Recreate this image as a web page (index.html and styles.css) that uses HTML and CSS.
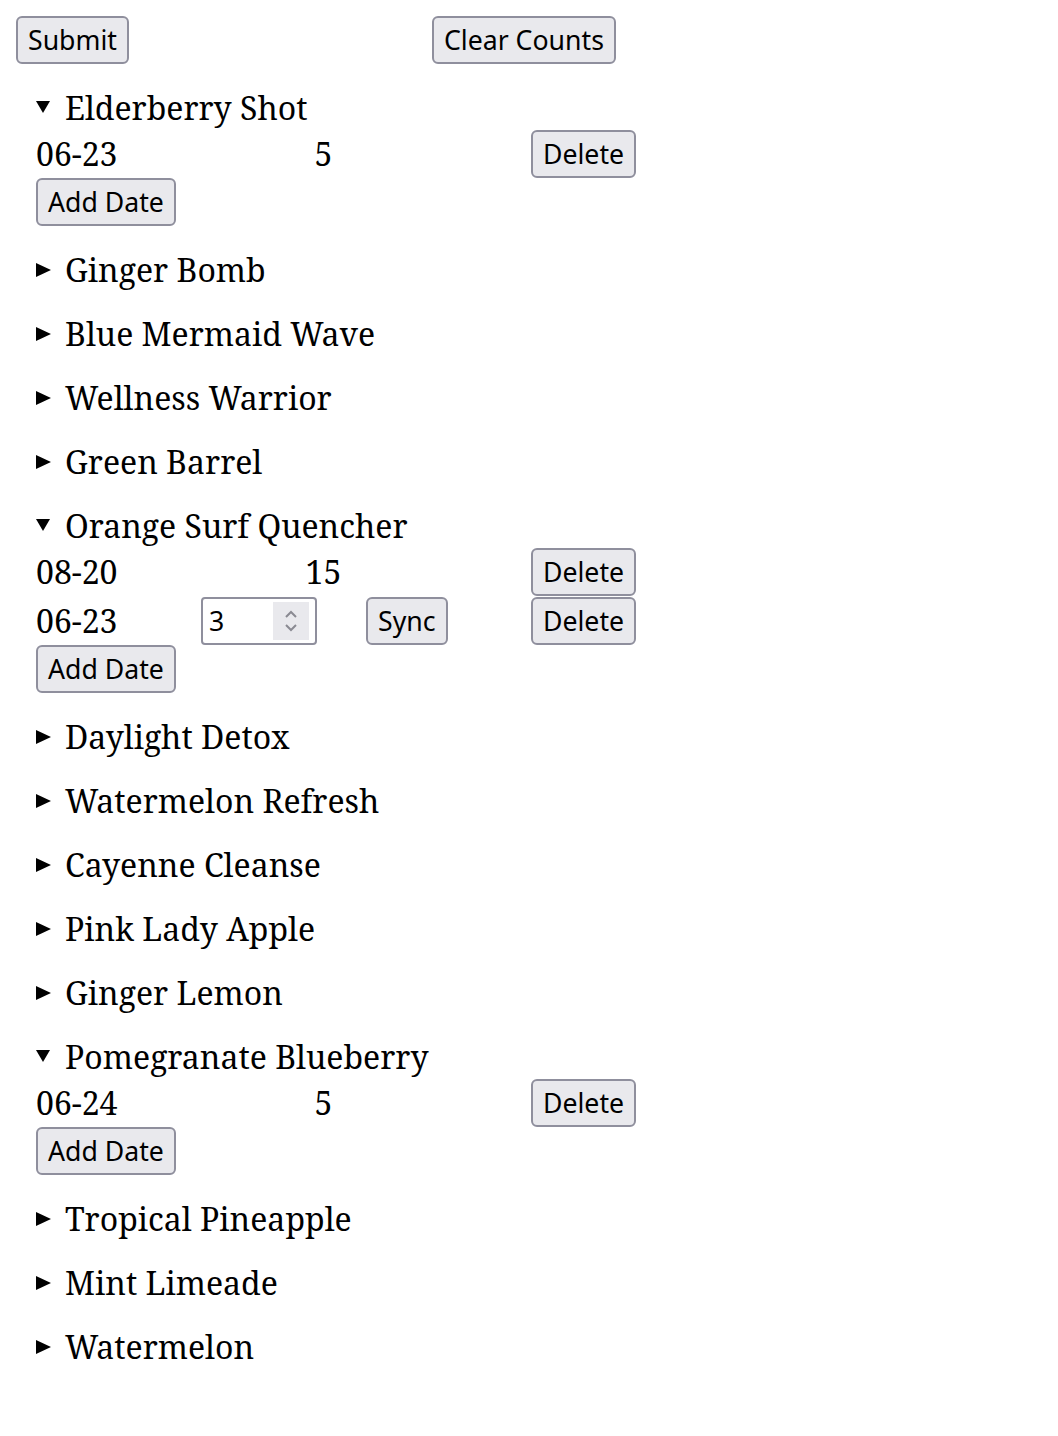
FILE: index.html
```html
<!DOCTYPE html>
<html>
<head>
<meta charset="utf-8">
<link rel="stylesheet" href="styles.css">
</head>
<body>
<div class="toolbar">
  <button class="btn">Submit</button>
  <button class="btn clear">Clear Counts</button>
</div>

<details open class="item">
  <summary>Elderberry Shot</summary>
  <div class="row">
    <span class="date">06-23</span>
    <span class="count">5</span>
    <button class="btn delete">Delete</button>
  </div>
  <div class="add"><button class="btn">Add Date</button></div>
</details>
<details class="item"><summary>Ginger Bomb</summary></details>
<details class="item"><summary>Blue Mermaid Wave</summary></details>
<details class="item"><summary>Wellness Warrior</summary></details>
<details class="item"><summary>Green Barrel</summary></details>
<details open class="item">
  <summary>Orange Surf Quencher</summary>
  <div class="row">
    <span class="date">08-20</span>
    <span class="count">15</span>
    <button class="btn delete">Delete</button>
  </div>
  <div class="row">
    <span class="date">06-23</span>
    <span class="num">
      <input class="num-input" type="text" value="3">
      <span class="spin"><svg width="16" height="26" viewBox="0 0 16 26"><path d="M3 9 L8 4 L13 9" fill="none" stroke="#8a8a92" stroke-width="2"/><path d="M3 17 L8 22 L13 17" fill="none" stroke="#8a8a92" stroke-width="2"/></svg></span>
    </span>
    <button class="btn sync">Sync</button>
    <button class="btn delete">Delete</button>
  </div>
  <div class="add"><button class="btn">Add Date</button></div>
</details>
<details class="item"><summary>Daylight Detox</summary></details>
<details class="item"><summary>Watermelon Refresh</summary></details>
<details class="item"><summary>Cayenne Cleanse</summary></details>
<details class="item"><summary>Pink Lady Apple</summary></details>
<details class="item"><summary>Ginger Lemon</summary></details>
<details open class="item">
  <summary>Pomegranate Blueberry</summary>
  <div class="row">
    <span class="date">06-24</span>
    <span class="count">5</span>
    <button class="btn delete">Delete</button>
  </div>
  <div class="add"><button class="btn">Add Date</button></div>
</details>
<details class="item"><summary>Tropical Pineapple</summary></details>
<details class="item"><summary>Mint Limeade</summary></details>
<details class="item"><summary>Watermelon</summary></details>
</body>
</html>
```
FILE: styles.css
```css
html, body {
  background: #fff;
}
body {
  margin: 16px;
  font-family: "Noto Serif", "DejaVu Serif", serif;
  font-size: 32px;
  color: #000;
}
.toolbar {
  display: flex;
  align-items: flex-start;
  padding-bottom: 2px;
}
.btn {
  box-sizing: border-box;
  font-family: "Noto Sans", "Open Sans", sans-serif;
  font-size: 26.67px;
  color: #000;
  background: #e9e9ed;
  border: 2px solid #8f8f9d;
  border-radius: 6px;
  padding: 0 10px;
  height: 48px;
  line-height: 44px;
  margin: 0;
}
.clear {
  margin-left: 303px;
}
.item {
  margin: 20px;
}
.item summary {
  list-style: none;
  display: flex;
  align-items: center;
  height: 44px;
  line-height: 44px;
  cursor: pointer;
}
.item[open] summary {
  height: 43px;
  align-items: flex-start;
}
.item summary::-webkit-details-marker {
  display: none;
}
.item summary::before {
  content: "";
  width: 0;
  height: 0;
  border-style: solid;
  border-color: transparent transparent transparent #000;
  border-width: 7px 0 7px 15px;
  margin-right: 14px;
}
.item[open] summary::before {
  border-color: #000 transparent transparent transparent;
  border-width: 12px 7px 0 7px;
  margin-right: 15px;
  margin-top: 15px;
}
.row {
  display: grid;
  grid-template-columns: 165px 116px 49px 80px 85px auto;
  align-items: center;
  height: 49px;
}
.date {
  grid-column: 1;
}
.count {
  grid-column: 2 / 5;
  text-align: center;
}
.delete {
  grid-column: 6;
  justify-self: start;
}
.sync {
  grid-column: 4;
  justify-self: start;
}
.add {
  display: flex;
  height: 48px;
  padding-bottom: 2px;
}
.num {
  grid-column: 2;
  display: flex;
  align-items: center;
  width: 116px;
  height: 48px;
  box-sizing: border-box;
  border: 2px solid #8f8f9d;
  border-radius: 4px;
  background: #fff;
  padding: 0 6px;
}
.num-input {
  border: 0;
  outline: none;
  width: 60px;
  padding: 0;
  font-family: "Noto Sans", "Open Sans", sans-serif;
  font-size: 26.67px;
  color: #000;
  background: transparent;
}
.spin {
  margin-left: auto;
  width: 36px;
  height: 38px;
  background: #e9e9ed;
  display: flex;
  align-items: center;
  justify-content: center;
}
```
